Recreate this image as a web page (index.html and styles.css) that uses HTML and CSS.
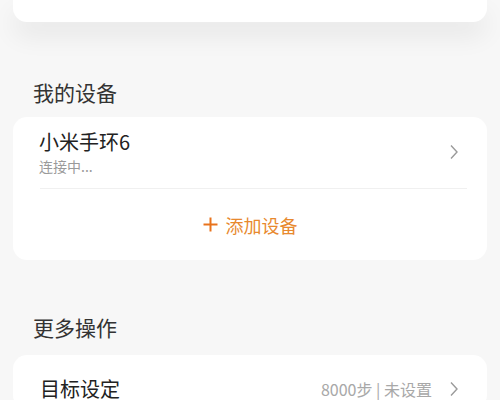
FILE: index.html
```html
<!DOCTYPE html>
<html lang="zh-CN">
<head>
<meta charset="UTF-8" />
<meta name="viewport" content="width=device-width, initial-scale=1" />
<title>设备</title>
<link rel="stylesheet" href="styles.css">
</head>
<body>
  <div class="card top-card"></div>

  <h2 class="section-title first">我的设备</h2>
  <div class="card">
    <div class="device-row">
      <div class="device-info">
        <div class="device-name">小米手环6</div>
        <div class="device-status">连接中...</div>
      </div>
      <svg class="chevron" width="10" height="16" viewBox="0 0 10 16">
        <polyline points="2,1.5 8,8 2,14.5" fill="none" stroke="#9a9a9a" stroke-width="1.4" />
      </svg>
    </div>
    <div class="divider"></div>
    <div class="add-row">
      <svg class="plus" width="15" height="15" viewBox="0 0 15 15">
        <line x1="7.5" y1="0.5" x2="7.5" y2="14.5" stroke="#e8731c" stroke-width="2" />
        <line x1="0.5" y1="7.5" x2="14.5" y2="7.5" stroke="#e8731c" stroke-width="2" />
      </svg>
      <span>添加设备</span>
    </div>
  </div>

  <h2 class="section-title second">更多操作</h2>
  <div class="card">
    <div class="option-row">
      <span class="option-name">目标设定</span>
      <span class="option-value">8000步 | 未设置</span>
      <svg class="chevron" width="10" height="16" viewBox="0 0 10 16">
        <polyline points="2,1.5 8,8 2,14.5" fill="none" stroke="#9a9a9a" stroke-width="1.4" />
      </svg>
    </div>
  </div>
</body>
</html>
```

FILE: styles.css
```css
body {
  margin: 0;
  padding: 0 13px;
  background: #f7f7f7;
  font-family: "Noto Sans CJK SC", "Noto Sans", sans-serif;
  color: #333;
}
.card {
  background: #fff;
  border-radius: 14px;
}
.top-card {
  height: 22px;
  border-radius: 0 0 14px 14px;
  box-shadow: 0 14px 26px rgba(0,0,0,0.07);
}
.section-title {
  font-size: 21px;
  font-weight: 400;
  line-height: 28px;
  color: #333;
  margin: 0;
  padding-left: 20px;
}
.section-title.first {
  margin-top: 56px;
  margin-bottom: 11px;
}
.section-title.second {
  margin-top: 53px;
  margin-bottom: 14px;
}
.device-row {
  display: flex;
  align-items: center;
  padding: 10px 28px 0 26px;
  height: 60px;
  box-sizing: border-box;
}
.device-info {
  flex: 1;
}
.device-name {
  font-size: 20px;
  line-height: 28px;
  color: #222;
}
.device-status {
  font-size: 14px;
  line-height: 20px;
  color: #9a9a9a;
}
.chevron {
  display: block;
}
.divider {
  height: 1px;
  background: #f0f0f0;
  margin: 11px 20px 0 27px;
}
.add-row {
  display: flex;
  align-items: center;
  justify-content: center;
  gap: 8px;
  height: 71px;
  color: #e8892e;
  font-size: 18px;
}
.option-row {
  display: flex;
  align-items: center;
  padding: 14px 28px 0 27px;
}
.option-name {
  flex: 1;
  font-size: 20px;
  line-height: 40px;
  color: #222;
}
.option-value {
  font-size: 16px;
  color: #a8a8a8;
  margin-right: 17px;
}
```
